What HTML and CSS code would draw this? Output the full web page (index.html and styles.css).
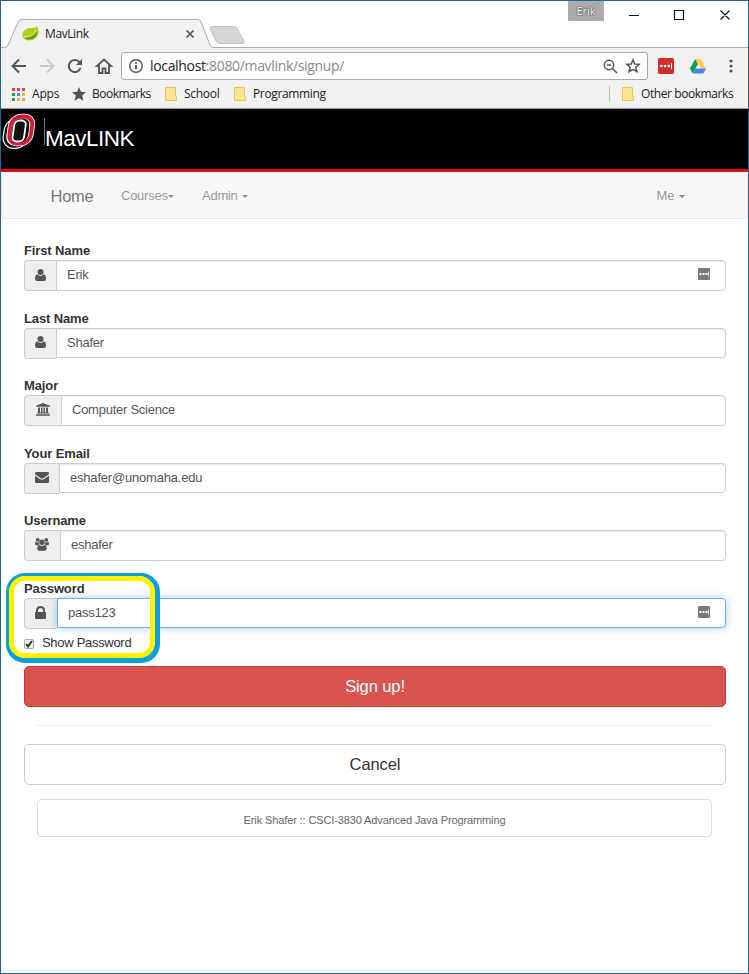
FILE: index.html
```html
<!DOCTYPE html>
<html lang="en">
<head>
<meta charset="utf-8">
<title>MavLink</title>
<link rel="stylesheet" href="styles.css">
</head>
<body>
<div class="window">
  <header class="chrome">
    <div class="tabstrip">
      <svg class="tab-shape" width="247" height="31" viewBox="0 0 247 31"><path d="M0 31V28.5H4Q6 28.500 7 26L17 3.500Q18.500.5 21 .5H197Q199 .5 200 3L209 26Q210 28.500 213 28.500H247V31Z" fill="#f1f1f1"/><path d="M0 28.500H4Q6 28.500 7 26L17 3.500Q18.500.5 21 .5H197Q199 .5 200 3L209 26Q210 28.500 213 28.500H247" fill="none" stroke="#aaa"/><path d="M209 9.500Q209 7.500 211 7.500H233Q235 7.500 236 9L243 22Q244 24.500 241 24.500H219Q216 24.500 215 22Z" fill="#d6d6d6" stroke="#c4c4c4"/></svg>
      <div class="tab">
        <svg width="18" height="17" viewBox="0 0 18 17"><path d="M1 13C-1 7 3 3 9 3C13 3 14 2 15 1C18 7 17 13 10 15C6 16 3 15 1 13Z" fill="#acd11b"/><path d="M2 13C7 12 12 11 15 6C16 12 10 16 4 14Z" fill="#6a9c27"/><path d="M2 12C8 12 12 10 14 5" stroke="#e7f090" fill="none"/></svg>
        <span class="tab-title">MavLink</span>
        <svg class="tab-close" width="10" height="10" viewBox="0 0 10 10"><path d="M1.500 1.500L8.500 8.500M8.500 1.500L1.500 8.500" stroke="#555" stroke-width="1.700"/></svg>
      </div>
      <span class="profile">Erik</span>
      <svg class="controls" width="104" height="12" viewBox="0 0 104 12"><path d="M0 6.500H10M45.500 1.500H54.500V10.500H45.500ZM91.500 1.500L100.500 10.500M100.500 1.500L91.500 10.500" fill="none" stroke="#111" stroke-width="1.200"/></svg>
    </div>
    <div class="toolbar">
      <div class="nav-icons">
        <svg width="16" height="16" viewBox="0 0 16 16"><path d="M15 8H2M8 1.500L1.500 8L8 14.500" fill="none" stroke="#555" stroke-width="2"/></svg>
        <svg width="16" height="16" viewBox="0 0 16 16"><path d="M1 8H14M8 1.500L14.500 8L8 14.500" fill="none" stroke="#ccc" stroke-width="2"/></svg>
        <svg width="16" height="16" viewBox="0 0 16 16"><path d="M13.500 10A6 6 0 1 1 12 3.700L13 5" fill="none" stroke="#555" stroke-width="2"/><path d="M15 1V7H9Z" fill="#555"/></svg>
        <svg width="18" height="16" viewBox="0 0 18 16"><path d="M4 8V15H7.500V10.500H10.500V15H14V8H16L9 1.500L2 8Z" fill="none" stroke="#555" stroke-width="1.900"/></svg>
      </div>
      <div class="omnibox">
        <svg width="16" height="16" viewBox="0 0 16 16"><circle cx="8" cy="8" r="6.300" fill="none" stroke="#555" stroke-width="1.400"/><path d="M8 7V11.500M8 4.300V6" stroke="#555" stroke-width="1.700"/></svg>
        <span class="url">localhost<span class="url-path">:8080/mavlink/signup/</span></span>
        <svg class="zoom" width="15" height="15" viewBox="0 0 15 15"><circle cx="6" cy="6" r="4.700" fill="none" stroke="#555" stroke-width="1.500"/><path d="M3.800 6H8.200M9.500 9.500L14 14" stroke="#555" stroke-width="1.600"/></svg>
        <svg width="16" height="16" viewBox="0 0 16 16"><path d="M8 1.800L9.700 6L14.200 6.300L10.800 9.200L11.900 13.700L8 11.300L4.100 13.700L5.200 9.200L1.800 6.300L6.300 6Z" fill="none" stroke="#555" stroke-width="1.500"/></svg>
      </div>
      <svg class="lastpass" width="16" height="16" viewBox="0 0 16 16"><rect width="16" height="16" rx="1.500" fill="#d32d2f"/><g fill="#fff"><circle cx="3.300" cy="8" r="1.300"/><circle cx="7" cy="8" r="1.300"/><circle cx="10.700" cy="8" r="1.300"/><path d="M13 5H14V11H13Z"/></g></svg>
      <svg class="drive" width="16" height="15" viewBox="0 0 16 15"><path d="M5.300 0L0 9.500L2.700 14.500L8 5Z" fill="#109d59"/><path d="M5.300 0H10.700L16 9.500H10.700Z" fill="#ffcd40"/><path d="M5.300 9.500H16L13.300 14.500H2.700Z" fill="#4587f3"/></svg>
      <svg width="4" height="14" viewBox="0 0 4 14" fill="#555"><circle cx="2" cy="2" r="1.600"/><circle cx="2" cy="7" r="1.600"/><circle cx="2" cy="12" r="1.600"/></svg>
    </div>
    <div class="bookmarks">
      <svg class="apps" width="13" height="13" viewBox="0 0 13 13"><path d="M0 0H3V3H0ZM5 0H8V3H5ZM10 0H13V3H10Z" fill="#dc4437"/><path d="M0 5H3V8H0ZM0 10H3V13H0Z" fill="#2c9c5a"/><path d="M5 5H8V8H5Z" fill="#4285f4"/><path d="M10 5H13V8H10ZM5 10H8V13H5ZM10 10H13V13H10Z" fill="#edae29"/></svg>
      <span class="bm-apps">Apps</span>
      <svg class="bm-star" width="14" height="14" viewBox="0 0 14 14"><path d="M7 0L9 4.800L14 5.200L10.200 8.600L11.400 13.700L7 11L2.600 13.700L3.800 8.600L0 5.200L5 4.800Z" fill="#555"/></svg>
      <span class="bm-main">Bookmarks</span>
      <svg class="folder" width="12" height="14" viewBox="0 0 12 14"><path d="M.5.5H10.500V9.500H11.500V13.500H.5Z" fill="#fee391" stroke="#e7c35b"/></svg>
      <span class="bm-school">School</span>
      <svg class="folder" width="12" height="14" viewBox="0 0 12 14"><path d="M.5.5H10.500V9.500H11.500V13.500H.5Z" fill="#fee391" stroke="#e7c35b"/></svg>
      <span class="bm-prog">Programming</span>
      <div class="other">
        <svg class="folder" width="12" height="14" viewBox="0 0 12 14"><path d="M.5.5H10.500V9.500H11.500V13.500H.5Z" fill="#fee391" stroke="#e7c35b"/></svg>
        <span class="bm-other">Other bookmarks</span>
      </div>
    </div>
  </header>

  <div class="brand">
    <svg width="36" height="38" viewBox="0 0 36 38"><g fill="none" transform="translate(17 18.500) skewX(-8)"><rect x="-12" y="-10.500" width="22" height="26.500" rx="10" stroke="#fff" stroke-width="5"/><rect x="-12" y="-10.500" width="22" height="26.500" rx="10" stroke="#111" stroke-width="2.600"/><rect x="-8" y="-14" width="21.500" height="27" rx="9" stroke="#fff" stroke-width="5.600"/><rect x="-8" y="-14" width="21.500" height="27" rx="9" stroke="#d71935" stroke-width="3.800"/><rect x="-5" y="-11" width="14.500" height="22" rx="6" fill="#111" stroke="#111" stroke-width="2"/><rect x="-4.500" y="-10" width="11.500" height="21" rx="4.500" stroke="#fff" stroke-width="1.800"/></g></svg>
    <span class="brand-name">MavLINK</span>
  </div>
  <nav class="navbar">
    <span class="nav-home">Home</span>
    <span class="nav-courses">Courses<i class="caret"></i></span>
    <span class="nav-admin">Admin <i class="caret gap"></i></span>
    <span class="nav-me">Me <i class="caret gap"></i></span>
  </nav>

  <main class="form">
    <div class="row"><div class="label">First Name</div><div class="group"><span class="addon user"><svg width="11" height="12" viewBox="0 0 11 12"><circle cx="5.500" cy="3" r="3"/><path d="M2.300 5.300Q5.500 8.500 8.700 5.300Q11 6 11 9.500Q11 12 9 12H2Q0 12 0 9.500Q0 6 2.300 5.300Z"/></svg></span><div class="input"><span>Erik</span><svg class="filler" width="12" height="12" viewBox="0 0 12 12"><rect width="12" height="12" rx="1" fill="#7b7b7b"/><path d="M1.500 5H3.500V7H1.500ZM4.500 5H6.500V7H4.500ZM7.500 5H9.500V7H7.500ZM10.200 3.500H11V8.500H10.200Z" fill="#fff"/></svg></div></div></div>
    <div class="row"><div class="label">Last Name</div><div class="group"><span class="addon user"><svg width="11" height="12" viewBox="0 0 11 12"><circle cx="5.500" cy="3" r="3"/><path d="M2.300 5.300Q5.500 8.500 8.700 5.300Q11 6 11 9.500Q11 12 9 12H2Q0 12 0 9.500Q0 6 2.300 5.300Z"/></svg></span><div class="input"><span>Shafer</span></div></div></div>
    <div class="row"><div class="label">Major</div><div class="group"><span class="addon major"><svg width="14" height="13" viewBox="0 0 14 13"><path d="M7 0L14 2.700V3.700H0V2.700ZM2 4.500H4V9.500H5V4.500H6.500V9.500H7.500V4.500H9V9.500H10V4.500H12V9.500H13V10.500H1V9.500H2ZM0 11.300H14V12.800H0Z"/></svg></span><div class="input"><span>Computer Science</span></div></div></div>
    <div class="row"><div class="label">Your Email</div><div class="group"><span class="addon email"><svg width="14" height="11" viewBox="0 0 13 10"><path d="M0 1Q0 0 1 0H12Q13 0 13 1Q13 2 12 2.700L8 5.500Q6.500 6.500 5 5.500L1 2.700Q0 2 0 1ZM0 3.300L4.500 6.400Q6.500 7.800 8.500 6.400L13 3.300V9Q13 10 12 10H1Q0 10 0 9Z"/></svg></span><div class="input"><span class="mail">eshafer@unomaha.edu</span></div></div></div>
    <div class="row"><div class="label">Username</div><div class="group"><span class="addon users"><svg width="14" height="13" viewBox="0 0 14 13"><circle cx="2.700" cy="1.900" r="1.900"/><circle cx="11.300" cy="1.900" r="1.900"/><circle cx="7" cy="4.200" r="2.700"/><path d="M1 3.800Q2.500 4.900 3.900 4.200Q3.900 5.800 4.500 6.500Q3.500 6.500 2.800 7.300H1.300Q0 7.300 0 6Q0 4 1 3.800ZM13 3.800Q11.500 4.900 10.100 4.200Q10.100 5.800 9.500 6.500Q10.500 6.500 11.200 7.300H12.700Q14 7.300 14 6Q14 4 13 3.800ZM4.200 7Q7 9 9.800 7Q11.700 7.300 11.700 10.500Q11.700 12.700 9.800 12.700H4.200Q2.300 12.700 2.300 10.500Q2.300 7.300 4.200 7Z"/></svg></span><div class="input"><span>eshafer</span></div></div></div>
    <div class="row password"><div class="label">Password</div><div class="group"><span class="addon lock"><svg width="11" height="13" viewBox="0 0 11 13"><path d="M1 6V4.500Q1 0 5.500 0Q10 0 10 4.500V6H10.300Q11 6 11 6.800V12Q11 13 10 13H1Q0 13 0 12V6.800Q0 6 .7 6ZM3 6H8V4.500Q8 2 5.500 2Q3 2 3 4.500Z"/></svg></span><div class="input focused"><span>pass123</span><svg class="filler" width="12" height="12" viewBox="0 0 12 12"><rect width="12" height="12" rx="1" fill="#7b7b7b"/><path d="M1.500 5H3.500V7H1.500ZM4.500 5H6.500V7H4.500ZM7.500 5H9.500V7H7.500ZM10.200 3.500H11V8.500H10.200Z" fill="#fff"/></svg></div></div></div>
    <div class="show"><span class="checkbox"><svg width="8" height="8" viewBox="0 0 8 8"><path d="M1 4L3 6.300L7 1" fill="none" stroke="#333" stroke-width="2"/></svg></span><span>Show Password</span></div>
    <div class="btn danger">Sign up!</div>
    <div class="rule"></div>
    <div class="btn plain">Cancel</div>
    <footer class="footer">Erik Shafer :: CSCI-3830 Advanced Java Programming</footer>
  </main>
  <div class="callout"><div class="callout-inner"></div></div>
</div>
</body>
</html>
```
FILE: styles.css
```css
* { box-sizing: border-box; }
body { margin: 0; background: #fff; font: 13px/18.5px "Liberation Sans", Arial, sans-serif; color: #333; }
svg { display: block; flex: none; }
.window { position: relative; width: 749px; height: 974px; border: 1px solid #1f6699; overflow: hidden; }

.chrome { height: 108px; background: #f1f1f1; border-bottom: 1px solid #999; font-family: "Open Sans", "Noto Sans", sans-serif; font-size: 12px; color: #222; white-space: nowrap; }
.tabstrip { position: relative; height: 47px; background: #fff; border-bottom: 1px solid #aaa; display: flex; align-items: flex-start; }
.tab-shape { position: absolute; left: 0; top: 18px; }
.tab { position: relative; display: flex; align-items: center; width: 210px; height: 29px; margin-top: 18px; padding-left: 21px; }
.tab-title { margin-left: 5px; padding-top: 2px; letter-spacing: -.4px; }
.tab-close { margin-left: auto; margin-right: 16px; }
.profile { margin-left: 357px; width: 36px; height: 20px; background: #acacac; color: #fff; font-size: 11px; line-height: 20px; text-align: center; text-shadow: 0 0 2px #333, 0 0 1px #333; }
.controls { margin: 8px 0 0 25px; }
.toolbar { display: flex; align-items: center; height: 36px; padding-left: 10px; }
.nav-icons { display: flex; gap: 12px; width: 110px; }
.omnibox { display: flex; align-items: center; width: 527px; height: 28px; padding: 0 6px; border: 1px solid #aaa; border-radius: 3px; background: #fff; }
.url { margin-left: 6px; font-size: 14px; letter-spacing: -.33px; padding-top: 1px; }
.url-path { color: #888; }
.zoom { margin-left: auto; margin-right: 7px; }
.lastpass { margin: 0 16px 0 10px; }
.drive { margin-right: 23px; }
.bookmarks { display: flex; align-items: center; height: 20px; padding-left: 11px; }
.bm-apps { width: 40px; margin-left: 7px; letter-spacing: -.2px; }
.bm-main { width: 73px; margin-left: 6px; letter-spacing: -.5px; }
.folder { margin-right: 7px; }
.bm-school { width: 50px; letter-spacing: -.3px; }
.bm-prog { letter-spacing: -.35px; }
.other { display: flex; align-items: center; margin-left: auto; height: 16px; padding-left: 12px; border-left: 1px solid #bbb; width: 139px; }
.bm-other { letter-spacing: -.42px; }

.brand { display: flex; height: 63px; background: #000; border-bottom: 3px solid #e00d10; }
.brand svg { margin-top: 3px; }
.brand-name { height: 27px; margin: 9px 0 0 7px; border-left: 1px solid #777; color: #fff; font-size: 22.500px; letter-spacing: -.5px; line-height: 41px; }
.navbar { display: flex; height: 47px; background: #f8f8f8; border: 1px solid #e7e7e7; border-top: 0; border-radius: 4px; color: #999; letter-spacing: -.25px; line-height: 47px; }
.nav-home { margin-left: 48.500px; width: 70.500px; color: #777; font-size: 16.500px; line-height: 48px; }
.nav-courses { width: 81px; }
.nav-me { margin-left: auto; margin-right: 62px; }
.caret { display: inline-block; vertical-align: middle; border-top: 3px solid #888; border-left: 3px solid transparent; border-right: 3px solid transparent; }
.gap { margin-left: 1.500px; }

.form { padding: 22.500px 22px 0 23px; letter-spacing: -.25px; }
.row { height: 67.500px; }
.label { position: relative; top: .5px; font-weight: bold; letter-spacing: -.12px; }
.group { display: flex; height: 31px; }
.addon { display: flex; align-items: center; justify-content: center; width: 32px; padding: 0 1px 2px 0; border: 1px solid #ccc; border-right: 0; border-radius: 4px 0 0 4px; background: #eee; fill: #555; }
.major { width: 37px; }
.email { width: 35px; }
.users { width: 36px; }
.lock { width: 33px; }
.input { flex: 1; display: flex; align-items: center; justify-content: space-between; height: 30.500px; padding: 0 15px 1px 10px; border: 1px solid #ccc; border-radius: 0 4px 4px 0; box-shadow: inset 0 1px 1px rgba(0,0,0,.075); color: #555; }
.input span { padding-top: 1px; }
.mail { letter-spacing: -.2px; }
.filler { margin-bottom: 1px; }
.focused { border-color: #66afe9; box-shadow: 0 0 8px rgba(102,175,233,.6); }
.password { height: 49.500px; }
.show { display: flex; align-items: center; height: 30px; letter-spacing: -.3px; }
.checkbox { display: flex; align-items: center; justify-content: center; width: 10px; height: 10px; margin-right: 8px; border: 1px solid #aaa; border-radius: 2px; background: #eee; }
.btn { height: 41px; border: 1px solid; border-radius: 5px; font-size: 16.500px; line-height: 38px; letter-spacing: -.1px; text-align: center; }
.danger { margin-top: 7px; background: #d9534f; border-color: #c23c39; color: #fff; }
.rule { margin: 18px 14px 18px 13px; border-top: 1px solid #eee; }
.plain { border-color: #ccc; color: #333; }
.footer { height: 38px; margin: 14px 14px 0 13px; border: 1px solid #ddd; border-radius: 4px; font-size: 11px; line-height: 41px; letter-spacing: -.12px; text-align: center; color: #666; }
.callout { position: absolute; left: 5px; top: 572px; width: 154px; height: 90px; border: solid #0aa0dc; border-width: 3px 5px 5px 3px; border-radius: 19px; }
.callout-inner { height: 100%; border: 5px solid #fff200; border-radius: 16px; box-shadow: 0 0 0 1px #0aa0dc; }
```
